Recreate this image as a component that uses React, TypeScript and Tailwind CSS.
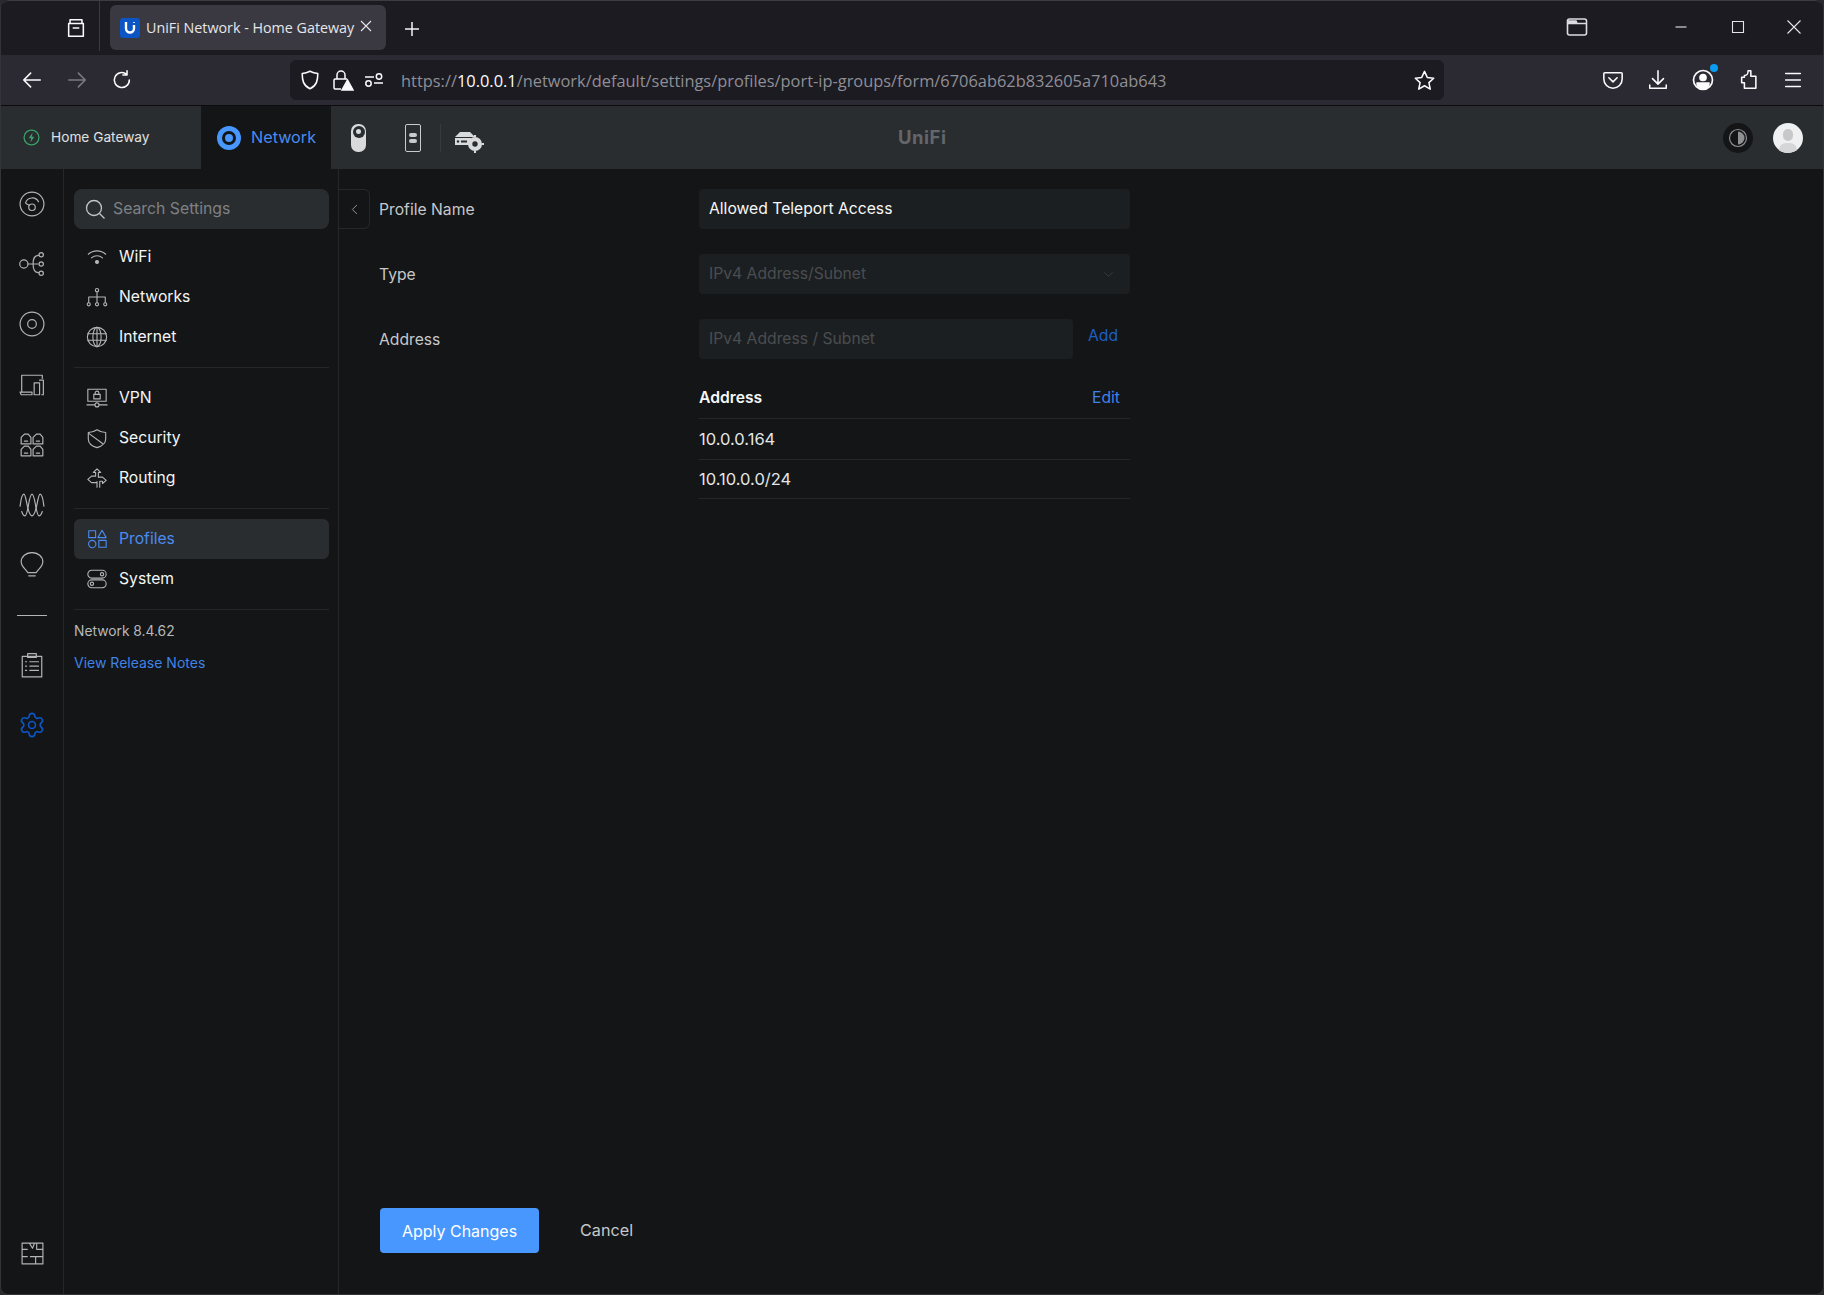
import { ReactNode } from "react"
import { Settings, ChevronLeft, ChevronDown } from "lucide-react"

function Ico({ size = 24, children, className = "", sw = 1.3 }: { size?: number; children: ReactNode; className?: string; sw?: number }) {
  return (
    <svg
      width={size}
      height={size}
      viewBox="0 0 24 24"
      fill="none"
      stroke="currentColor"
      strokeWidth={sw}
      strokeLinecap="round"
      strokeLinejoin="round"
      className={className}
    >
      {children}
    </svg>
  )
}

const railIcons: ReactNode[] = [
  <>
    <circle cx="12" cy="12" r="11" />
    <path d="M6 11a6.500 6.500 0 0 1 12-1" />
    <circle cx="12" cy="15" r="3" />
    <path d="M9.600 13.400 6.500 11.500" />
  </>,
  <>
    <circle cx="4.500" cy="12" r="3.800" />
    <path d="M8.300 12h9.200M13 12c0-5 1-8 5-8M13 12c0 5 1 8 5 8" />
    <circle cx="20.500" cy="3.500" r="2" />
    <circle cx="20.500" cy="12" r="2" />
    <circle cx="20.500" cy="20.500" r="2" />
  </>,
  <>
    <circle cx="12" cy="12" r="11" />
    <circle cx="12" cy="12" r="4" />
  </>,
  <>
    <path d="M2.500 18V3h19v3" />
    <path d="M1 18.500h11v2.500H2z" />
    <path d="M14 10h5v11h-5zM19 7.500h3.500V21H21" />
  </>,
  <>
    <path d="M2 11V5l3-3h3.500L11 5v6zM13 11V5l3-3h3.500L22 5v6z" />
    <path d="M2 22v-6l3-3h3.500L11 16v6zM13 22v-6l3-3h3.500L22 16v6z" />
    <path d="M5 8.500h3M16 8.500h3M5 19.500h3M16 19.500h3" />
  </>,
  <>
    <path d="M1 13C2 5 3 2 4.500 2 7 2 7.500 22 12 22S17 2 19.500 2C21 2 22 5 23 13" />
    <path d="M2.500 18c1 3 2 4 3 4C8.500 22 9 2 12 2s3.500 20 6.500 20c1 0 2-1 3-4" />
  </>,
  <>
    <path d="M8 19c-1-3-6-5-6-10a10 8.500 0 0 1 20 0c0 5-5 7-6 10z" />
    <path d="M9 22h6" />
  </>,
  <>
    <path d="M3 4h18v19H3z" />
    <path d="M8 1.500h8V5H8z" />
    <path d="M6 9h1M10 9h8M6 13h1M10 13h8M6 17h1M10 17h8" />
  </>,
]

const BottomRailIcon = () => (
  <Ico size={25} sw={1.1}>
    <path d="M2 2h20v20H2zM2 8h5M16 2v6h6M9 2l3 5 2-5M2 15h5M10 15h12M15 15v7" />
  </Ico>
)

const navIcons: Record<string, ReactNode> = {
  WiFi: (
    <>
      <path d="M2.500 9a14 14 0 0 1 19 0M6 13a9 9 0 0 1 12 0" />
      <circle cx="12" cy="17.500" r="1.600" fill="currentColor" />
    </>
  ),
  Networks: (
    <>
      <circle cx="12" cy="4.500" r="1.800" />
      <path d="M12 6.300V12M3 18v-6h18v6M12 12v6" />
      <circle cx="3" cy="20" r="1.700" />
      <circle cx="12" cy="20" r="1.700" />
      <circle cx="21" cy="20" r="1.700" />
    </>
  ),
  Internet: (
    <>
      <circle cx="12" cy="12" r="10.500" />
      <ellipse cx="12" cy="12" rx="4.500" ry="10.500" />
      <path d="M2 8.500h20M2 15.500h20M12 1.500v21" />
    </>
  ),
  VPN: (
    <>
      <path d="M2 2.500h20v13H2z" />
      <path d="M8.500 8h7v5h-7zM10 8V6.500a2 2 0 0 1 4 0V8M1 19.500h8.500M14.500 19.500H23" />
      <circle cx="12" cy="19.500" r="2.200" />
    </>
  ),
  Security: (
    <>
      <path d="M12 3c3 2 6 3 9.500 3v7c0 5-5 8-9.500 9.500C7 21 2.500 18 2.500 13V6C6 6 9 5 12 3z" />
      <path d="M3 7l15 11" />
    </>
  ),
  Routing: (
    <>
      <path d="M12 22v-6M12 2 8 6h2.500v4H6L2 13.500 6 17h6M12 2l4 4h-2.500v5" />
      <path d="M13.500 11H18l4 3.500L18 18v-2.500h-3V22" />
    </>
  ),
  Profiles: (
    <>
      <path d="M3 3h7.500v7.500H3z" />
      <path d="M17.500 2.500 22 10.500h-9z" />
      <circle cx="6.800" cy="17.500" r="4" />
      <path d="M14 13.500h8V21h-8z" />
    </>
  ),
  System: (
    <>
      <rect x="2" y="2.500" width="20" height="8.500" rx="4.200" />
      <rect x="2" y="13" width="20" height="8.500" rx="4.200" />
      <circle cx="17.500" cy="6.800" r="1.800" />
      <circle cx="6.500" cy="17.200" r="1.800" />
    </>
  ),
}

function NavItem({ label, active = false }: { label: string; active?: boolean }) {
  return (
    <div
      className={`flex h-10 items-center rounded-md pl-[12px] ${active ? "bg-[#2a2d30] text-[#4a8bef]" : "text-[#f4f5f6]"}`}
    >
      <span className={`flex w-[33px] ${active ? "" : "text-[#b4b6b8]"}`}>
        <Ico size={22} sw={1.2}>{navIcons[label]}</Ico>
      </span>
      <span className="text-[15.700px] leading-none">{label}</span>
    </div>
  )
}

function Row({ label, children, className = "" }: { label: string; children: ReactNode; className?: string }) {
  return (
    <div className={`flex ${className}`}>
      <div className="flex h-10 w-[320px] shrink-0 items-center pt-[2px] text-[15.700px] text-[#c6c8ca]">{label}</div>
      {children}
    </div>
  )
}

function Firefox() {
  return (
    <div className="font-['Open_Sans',sans-serif] text-[#fbfbfe]">
      {/* tab strip */}
      <div className="flex h-[55px] items-start rounded-t-lg border-t border-[#3c3c42] bg-[#1c1b22]">
        <div className="flex h-[50px] w-[99px] items-center border-r border-[#3a3a40]">
          <Ico size={22} className="ml-[64px] mt-[4px]" sw={1.7}>
            <path d="M4 7h16v14H4z M5.500 3h13v4h-13z M9 12h6" />
          </Ico>
        </div>
        <div className="ml-[10px] mt-[4px] flex h-[45px] w-[276px] items-center rounded-md bg-[#3a3941] pl-[10px]">
          <span className="flex h-5 w-5 items-center justify-center rounded-[3px] bg-[#0b55c4]">
            <svg width="12" height="13" viewBox="0 0 12 13" fill="none">
              <path d="M2 1v6.500a4 4 0 0 0 8 0V4" stroke="#fff" strokeWidth="2.400" />
              <path d="M10 1v1" stroke="#fff" strokeWidth="1.500" />
            </svg>
          </span>
          <span className="ml-[6px] w-[209px] whitespace-nowrap text-[14.300px] text-[#e6e6ea]">UniFi Network - Home Gateway</span>
          <svg width="14" height="14" viewBox="0 0 14 14" stroke="#e6e6ea" strokeWidth="1.100" className="mb-[3px] ml-[4px]">
            <path d="M2 2l10 10M12 2 2 12" />
          </svg>
        </div>
        <svg width="18" height="18" viewBox="0 0 18 18" stroke="#f4f4f6" strokeWidth="1.500" className="ml-[17px] mt-[19px]">
          <path d="M9 2v14M2 9h14" />
        </svg>
        <div className="ml-auto flex items-center pt-[16px]">
          <svg width="22" height="20" viewBox="0 0 22 20" fill="none" stroke="#dcdce0" strokeWidth="1.600" className="mr-[86px]">
            <rect x="1.500" y="2" width="19" height="16" rx="2" />
            <path d="M1.500 6.500h19M2 4h8l1 2.500H2z" fill="#dcdce0" />
          </svg>
          <svg width="14" height="14" viewBox="0 0 14 14" stroke="#e4e4e8" strokeWidth="1.100" className="mr-[43px]">
            <path d="M1.500 7h11" />
          </svg>
          <svg width="14" height="14" viewBox="0 0 14 14" fill="none" stroke="#e4e4e8" strokeWidth="1.100" className="mr-[41px]">
            <path d="M1.500 1.500h11v11h-11z" />
          </svg>
          <svg width="16" height="16" viewBox="0 0 16 16" stroke="#e4e4e8" strokeWidth="1.100" className="mr-[21px]">
            <path d="M1.500 1.500l13 13M14.500 1.500l-13 13" />
          </svg>
        </div>
      </div>
      {/* toolbar */}
      <div className="flex h-[50px] items-center bg-[#2b2a33]">
        <div className="flex w-[289px] items-center">
          <Ico size={22} className="ml-[20px]" sw={1.7}>
            <path d="M21 12H3M10.500 4.500 3 12l7.500 7.500" />
          </Ico>
          <Ico size={22} className="ml-[23px] text-[#7a7980]" sw={1.7}>
            <path d="M3 12h18M13.500 4.500 21 12l-7.500 7.500" />
          </Ico>
          <Ico size={22} className="ml-[23px]" sw={1.7}>
            <path d="M20 12a8.200 8.200 0 1 1-3-6.300M17.500 2v4.500H13" />
          </Ico>
        </div>
        <div className="flex h-10 w-[1154px] items-center rounded-md bg-[#1c1b22]">
          <Ico size={22} className="ml-[9px]" sw={1.7}>
            <path d="M12 2.500c3 1.500 6 2.200 8.500 2.500 0 7-1 13-8.500 16.500C4.500 18 3.500 12 3.500 5 6 4.700 9 4 12 2.500z" />
          </Ico>
          <svg width="24" height="24" viewBox="0 0 24 24" fill="none" stroke="#fbfbfe" strokeWidth="1.500" className="ml-[9px]">
            <path d="M7 11V7a4 4 0 0 1 8 0v4M11 21H5a1.500 1.500 0 0 1-1-1.500v-7A1.500 1.500 0 0 1 5 11h12" />
            <path d="M17.500 12 12 22h11z" fill="#fbfbfe" />
          </svg>
          <svg width="22" height="22" viewBox="0 0 22 22" fill="none" stroke="#fbfbfe" strokeWidth="1.500" className="ml-[9px]">
            <path d="M2 8h9M20 14h-9" />
            <circle cx="16" cy="7.500" r="2.700" />
            <circle cx="5.500" cy="14.500" r="2.700" />
          </svg>
          <span className="ml-[16px] whitespace-nowrap pt-[3px] text-[16.400px] text-[#8f8f95]">
            https://<span className="text-[#fbfbfe]">10.0.0.1</span>/network/default/settings/profiles/port-ip-groups/form/6706ab62b832605a710ab643
          </span>
          <Ico size={23} className="ml-auto mr-[8px]" sw={1.6}>
            <path d="m12 2.500 2.900 6.300 6.700.8-5 4.600 1.400 6.800L12 17.500 6 21l1.400-6.800-5-4.600 6.700-.8z" />
          </Ico>
        </div>
        <div className="ml-[158px] flex items-center gap-[22.500px]">
          <Ico size={22} sw={1.7}>
            <path d="M3 4h18a1 1 0 0 1 1 1v6a10 10 0 0 1-20 0V5a1 1 0 0 1 1-1zM7.500 9.500 12 14l4.500-4.500" />
          </Ico>
          <Ico size={22} sw={1.7}>
            <path d="M12 2v14M6 10.500l6 6 6-6M3 17.500V21h18v-3.500" />
          </Ico>
          <div className="relative">
            <Ico size={24} sw={1.7}>
              <circle cx="12" cy="12" r="9.500" />
              <circle cx="12" cy="9.500" r="3" fill="currentColor" />
              <path d="M6 15h12a6 6 0 0 1-12 0z" fill="currentColor" />
            </Ico>
            <span className="absolute -right-[3px] -top-[4px] h-[8px] w-[8px] rounded-full bg-[#0a9cf0]" />
          </div>
          <Ico size={22} sw={1.7}>
            <path d="M11 2h3v6h5.500v13H7v-6H4v-6h3V7c3 0 4-1 4-5z" />
          </Ico>
          <Ico size={22} sw={1.7}>
            <path d="M4 5h16M4 12h16M4 19h16" />
          </Ico>
        </div>
      </div>
    </div>
  )
}

function AppHeader() {
  return (
    <div className="flex h-[64px] items-center border-t border-[#0c0c0e] bg-[#292d30] font-['Inter',sans-serif]">
      <div className="flex h-full w-[200px] items-center pl-[22px]">
        <svg width="17" height="17" viewBox="0 0 24 24" fill="none" className="shrink-0">
          <circle cx="12" cy="12" r="10.500" stroke="#38a169" strokeWidth="1.800" />
          <path d="M13.500 5 8 13h3.500l-1 6 5.500-8h-3.500z" fill="#38a169" />
        </svg>
        <span className="ml-[11px] text-[13.700px] text-[#e0e1e2]">Home Gateway</span>
      </div>
      <div className="flex h-full w-[130px] items-center bg-[#131517] pl-[16px]">
        <span className="flex h-[24px] w-[24px] items-center justify-center rounded-full bg-[#4797ff]">
          <span className="h-[14px] w-[14px] rounded-full border-[3px] border-[#131517]" />
        </span>
        <span className="ml-[10px] text-[16.200px] text-[#4a8bef]">Network</span>
      </div>
      <div className="ml-[20px] flex h-[28px] w-[15px] flex-col items-center justify-between rounded-[7px] bg-[#d8dadb] py-[2px]">
        <span className="flex h-[12px] w-[12px] items-center justify-center rounded-full bg-[#292d30]">
          <span className="h-[5px] w-[5px] rounded-full bg-[#d8dadb]" />
        </span>
      </div>
      <div className="ml-[39px] flex h-[28px] w-[16px] flex-col items-center justify-center gap-[2px] rounded-[2px] border border-[#c8cacb]">
        <span className="h-[4px] w-[8px] rounded-sm bg-[#c8cacb]" />
        <span className="h-[4px] w-[8px] rounded-sm bg-[#c8cacb]" />
      </div>
      <div className="ml-[19px] h-[28px] w-px bg-[#373b3e]" />
      <svg width="30" height="24" viewBox="0 0 30 24" fill="#d8dadb" className="ml-[13px] mt-[8px]">
        <path d="M6 2h10l5 5H1z" />
        <path d="M1 8h16v7H1z" />
        <circle cx="4" cy="11.500" r="1.200" fill="#292d30" />
        <path d="M7 10.500h6v2H7z" fill="#292d30" />
        <circle cx="21" cy="14" r="7" />
        <circle cx="21" cy="14" r="2.700" fill="#292d30" />
        <path d="M20 5h2v2h-2zM20 21h2v2h-2zM12 13h2v2h-2zM28 13h2v2h-2z" />
      </svg>
      <span className="ml-[414px] text-[18.500px] font-bold tracking-[0.5px] text-[#63676a]">UniFi</span>
      <div className="ml-auto flex items-center">
        <span className="flex h-[30px] w-[30px] items-center justify-center rounded-full bg-[#131517]">
          <svg width="20" height="20" viewBox="0 0 20 20" fill="none">
            <circle cx="10" cy="10" r="8.500" stroke="#8e9194" strokeWidth="1.200" />
            <path d="M10 3.500a6.500 6.500 0 0 1 0 13z" fill="#8e9194" />
          </svg>
        </span>
        <span className="relative ml-[20px] mr-[20px] h-[30px] w-[30px] overflow-hidden rounded-full bg-[#eef0f1]">
          <span className="absolute left-[10px] top-[6px] h-[12px] w-[10px] rounded-full bg-[#c6c8ca]" />
          <span className="absolute left-[6px] top-[20px] h-[14px] w-[18px] rounded-full bg-[#d4d6d8]" />
        </span>
      </div>
    </div>
  )
}

function Rail() {
  return (
    <div className="flex w-[63px] shrink-0 flex-col items-center border-r border-[#25282b] pb-[28px] pt-[22px] text-[#b2b4b6]">
      <div className="flex flex-col items-center gap-[34.200px]">
        {railIcons.slice(0, 7).map((icon, i) => (
          <Ico key={i} size={26} sw={1.1}>
            {icon}
          </Ico>
        ))}
      </div>
      <div className="mb-[36px] mt-[37px] h-px w-[30px] bg-[#b2b4b6]" />
      <Ico size={26} sw={1.1}>{railIcons[7]}</Ico>
      <Settings size={28} strokeWidth={1.400} className="mt-[33px] text-[#0b55c4]" />
      <div className="mt-auto">
        <BottomRailIcon />
      </div>
    </div>
  )
}

function Sidebar() {
  return (
    <div className="flex w-[275px] shrink-0 flex-col border-r border-[#25282b] pl-[10px] pr-[9px] pt-[20px]">
      <div className="flex h-10 items-center rounded-lg bg-[#2a2d30] pl-[10px]">
        <svg width="22" height="22" viewBox="0 0 22 22" fill="none" stroke="#c4c6c8" strokeWidth="1.300">
          <circle cx="10" cy="10" r="7.500" />
          <path d="m15.500 15.500 5 5" />
        </svg>
        <span className="ml-[7px] text-[15.800px] text-[#7e8184]">Search Settings</span>
      </div>
      <div className="mt-[8px]">
        <NavItem label="WiFi" />
        <NavItem label="Networks" />
        <NavItem label="Internet" />
      </div>
      <div className="mb-[10.500px] mt-[9.500px] h-px bg-[#25282b]" />
      <NavItem label="VPN" />
      <NavItem label="Security" />
      <NavItem label="Routing" />
      <div className="mb-[10.500px] mt-[9.500px] h-px bg-[#25282b]" />
      <NavItem label="Profiles" active />
      <NavItem label="System" />
      <div className="my-[9.500px] h-px bg-[#25282b]" />
      <div className="mt-[2px] text-[13.800px] leading-[20px] text-[#b6b8ba]">Network 8.4.62</div>
      <div className="mt-[12px] text-[14px] leading-[20px] text-[#3f82e8]">View Release Notes</div>
    </div>
  )
}

function Form() {
  return (
    <div className="flex min-w-0 flex-1 flex-col pb-[41px] pt-[20px]">
      <div className="flex">
        <div className="flex h-10 w-[31px] shrink-0 items-center justify-center rounded-r-md border border-l-0 border-[#25282b]">
          <ChevronLeft size={17} strokeWidth={1.300} className="text-[#9a9c9f]" />
        </div>
        <div className="ml-[9px]">
          <Row label="Profile Name">
            <div className="flex h-10 w-[431px] items-center rounded bg-[#1c1f21] pl-[10px] text-[15.700px] text-[#f6f7f7]">
              Allowed Teleport Access
            </div>
          </Row>
          <Row label="Type" className="mt-[25px]">
            <div className="flex h-10 w-[431px] items-center justify-between rounded bg-[#1c1f21] pl-[10px] pr-[14px] text-[15.700px] text-[#4a4d50]">
              IPv4 Address/Subnet
              <ChevronDown size={15} strokeWidth={1.300} className="text-[#404346]" />
            </div>
          </Row>
          <Row label="Address" className="mt-[25px]">
            <div className="w-[431px]">
              <div className="flex h-10 items-center">
                <div className="flex h-10 w-[374px] items-center rounded bg-[#1c1f21] pl-[10px] text-[15.700px] text-[#4a4d50]">
                  IPv4 Address / Subnet
                </div>
                <span className="mb-[6px] ml-[15px] text-[15.700px] text-[#1d5fc4]">Add</span>
              </div>
              <div className="mt-[19px] flex h-[41px] items-center justify-between border-b border-[#25282b] pr-[10px] text-[15.700px]">
                <span className="font-semibold text-[#f6f7f7]">Address</span>
                <span className="text-[#3f82e8]">Edit</span>
              </div>
              <div className="flex h-[41px] items-center border-b border-[#25282b] text-[16.500px] text-[#e4e5e6]">10.0.0.164</div>
              <div className="flex h-[39px] items-center border-b border-[#25282b] text-[16.500px] text-[#e4e5e6]">10.10.0.0/24</div>
            </div>
          </Row>
        </div>
      </div>
      <div className="ml-[41px] mt-auto flex items-center">
        <div className="flex h-[45px] w-[159px] items-center justify-center rounded bg-[#4797ff] text-[16px] text-white">Apply Changes</div>
        <span className="ml-[41px] text-[16.200px] text-[#c6c8ca]">Cancel</span>
      </div>
    </div>
  )
}

export default function App() {
  return (
    <div className="h-[1295px] w-[1824px] overflow-hidden bg-[#2a2a2e]">
      <div className="flex h-[1295px] flex-col overflow-hidden rounded-lg border-x border-b border-[#333338] bg-[#131517] font-['Inter',sans-serif]">
        <Firefox />
        <AppHeader />
        <div className="flex min-h-0 flex-1">
          <Rail />
          <Sidebar />
          <Form />
        </div>
      </div>
    </div>
  )
}
